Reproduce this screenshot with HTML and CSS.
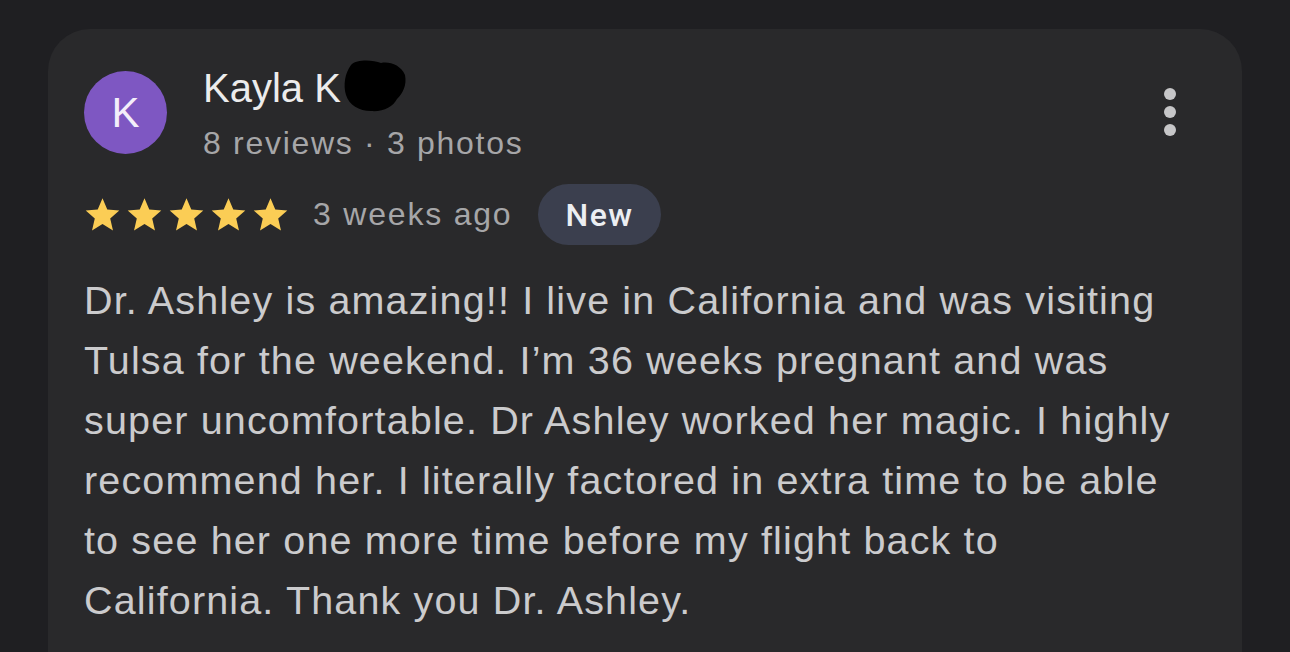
FILE: index.html
```html
<!DOCTYPE html>
<html>
<head>
<meta charset="utf-8">
<link rel="stylesheet" href="styles.css">
</head>
<body>
<div class="card">
  <div class="header">
    <div class="avatar">K</div>
    <div class="who">
      <div class="name">Kayla K<svg class="redact" width="64" height="54" viewBox="0 0 64 54"><path d="M8 6 C14 0 30 1 38 4 C46 2 58 6 62 16 C64 26 60 34 54 40 C50 48 40 53 28 52 C16 52 6 46 3 36 C0 26 2 14 8 6 Z" fill="#000"/></svg></div>
      <div class="meta">8 reviews · 3 photos</div>
    </div>
    <div class="kebab"><span></span><span></span><span></span></div>
  </div>
  <div class="rating">
    <div class="stars">
      <svg viewBox="0 0 24 24"><path d="M12 1.5l3.1 7.2 7.8.7-5.9 5.2 1.8 7.7L12 18.2l-6.8 4.1 1.8-7.7-5.9-5.2 7.8-.7z"/></svg>
      <svg viewBox="0 0 24 24"><path d="M12 1.5l3.1 7.2 7.8.7-5.9 5.2 1.8 7.7L12 18.2l-6.8 4.1 1.8-7.7-5.9-5.2 7.8-.7z"/></svg>
      <svg viewBox="0 0 24 24"><path d="M12 1.5l3.1 7.2 7.8.7-5.9 5.2 1.8 7.7L12 18.2l-6.8 4.1 1.8-7.7-5.9-5.2 7.8-.7z"/></svg>
      <svg viewBox="0 0 24 24"><path d="M12 1.5l3.1 7.2 7.8.7-5.9 5.2 1.8 7.7L12 18.2l-6.8 4.1 1.8-7.7-5.9-5.2 7.8-.7z"/></svg>
      <svg viewBox="0 0 24 24"><path d="M12 1.5l3.1 7.2 7.8.7-5.9 5.2 1.8 7.7L12 18.2l-6.8 4.1 1.8-7.7-5.9-5.2 7.8-.7z"/></svg>
    </div>
    <span class="ago">3 weeks ago</span>
    <span class="badge">New</span>
  </div>
  <p class="body">Dr. Ashley is amazing!! I live in California and was visiting<br>Tulsa for the weekend. I’m 36 weeks pregnant and was<br>super uncomfortable. Dr Ashley worked her magic. I highly<br>recommend her. I literally factored in extra time to be able<br>to see her one more time before my flight back to<br>California. Thank you Dr. Ashley.</p>
</div>
</body>
</html>
```
FILE: styles.css
```css
html, body {
  margin: 0;
  padding: 0;
}
body {
  background: #1f1f22;
  font-family: "Liberation Sans", Arial, sans-serif;
  height: 652px;
  overflow: hidden;
  padding: 29px 48px 0 48px;
  box-sizing: border-box;
}
.card {
  background: #29292b;
  border-radius: 42px 42px 0 0;
  height: 700px;
  padding: 42px 36px 0 36px;
  box-sizing: border-box;
}
.header {
  display: flex;
  align-items: flex-start;
}
.avatar {
  width: 83px;
  height: 83px;
  border-radius: 50%;
  background: #7e57c2;
  color: #f3eefa;
  font-size: 42px;
  display: flex;
  align-items: center;
  justify-content: center;
  flex: none;
}
.who {
  margin-left: 36px;
  flex: 1;
}
.name {
  color: #ececec;
  font-size: 40px;
  line-height: 40px;
  margin-top: -8px;
  display: flex;
  align-items: center;
}
.redact {
  margin-left: 2px;
  margin-top: -4px;
}
.meta {
  color: #a6a6a8;
  font-size: 32px;
  letter-spacing: 1.7px;
  line-height: 40px;
  margin-top: 10px;
}
.kebab {
  display: flex;
  flex-direction: column;
  gap: 6px;
  margin-top: 17px;
  margin-right: 30px;
}
.kebab span {
  width: 12px;
  height: 12px;
  border-radius: 50%;
  background: #c6c6c8;
}
.rating {
  display: flex;
  align-items: center;
  margin-top: 21px;
  height: 61px;
}
.stars {
  display: flex;
  gap: 5px;
  margin-right: 24px;
}
.stars svg {
  width: 37px;
  height: 37px;
  fill: #fbcd55;
}
.ago {
  color: #a6a6a8;
  font-size: 32px;
  letter-spacing: 1.8px;
  margin-right: 26px;
}
.badge {
  background: #3b3f4e;
  color: #eceef2;
  font-family: Roboto, "Liberation Sans", sans-serif;
  font-size: 32px;
  font-weight: 500;
  letter-spacing: 1.5px;
  height: 61px;
  padding: 0 27px;
  border-radius: 31px;
  display: flex;
  align-items: center;
}
.body {
  margin: 25px 0 0 0;
  color: #cbcbcd;
  font-size: 39.5px;
  line-height: 60px;
  letter-spacing: 1.15px;
  white-space: nowrap;
}
```
